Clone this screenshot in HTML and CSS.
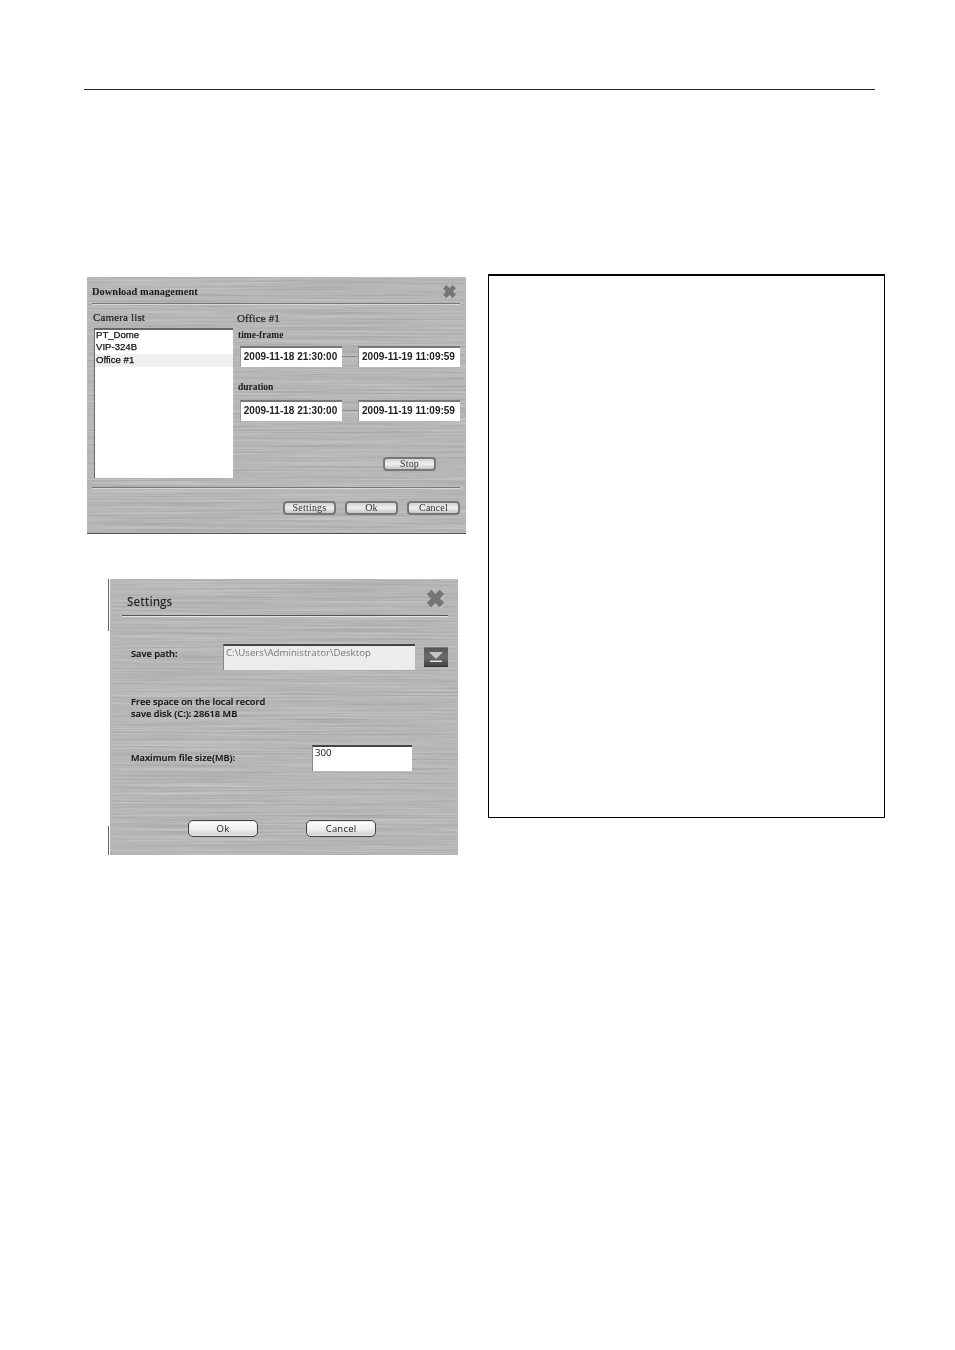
FILE: index.html
```html
<!DOCTYPE html>
<html lang="en">
<head>
<meta charset="utf-8">
<title>Download management</title>
<link rel="stylesheet" href="styles.css">
</head>
<body>
<div class="page">
  <div class="top-rule"></div>
  <div class="content">
    <div class="shots">
      <section class="dlg dlg-download">
        <header class="dl-title">
          <span>Download management</span>
          <svg class="close" viewBox="0 0 16 16"><path d="M3.500 3.500 12.500 12.500M12.500 3.500 3.500 12.500"/></svg>
        </header>
        <div class="rule"></div>
        <div class="dl-body">
          <div class="dl-left">
            <div class="dl-label">Camera list</div>
            <ul class="cam-list">
              <li>PT_Dome</li>
              <li>VIP-324B</li>
              <li class="sel">Office #1</li>
            </ul>
          </div>
          <div class="dl-right">
            <div class="dl-label dl-office">Office #1</div>
            <div class="dl-sub">time-frame</div>
            <div class="range">
              <div class="dt">2009-11-18 21:30:00</div><i class="dash"></i><div class="dt">2009-11-19 11:09:59</div>
            </div>
            <div class="dl-sub dl-dur">duration</div>
            <div class="range">
              <div class="dt">2009-11-18 21:30:00</div><i class="dash"></i><div class="dt">2009-11-19 11:09:59</div>
            </div>
            <div class="stop-row"><button class="btn1">Stop</button></div>
          </div>
        </div>
        <div class="rule"></div>
        <div class="dl-actions">
          <button class="btn1">Settings</button>
          <button class="btn1">Ok</button>
          <button class="btn1">Cancel</button>
        </div>
      </section>

      <section class="dlg dlg-settings">
        <header class="st-title">
          <span>Settings</span>
          <svg class="close close-lg" viewBox="0 0 16 16"><path d="M3.500 3.500 12.500 12.500M12.500 3.500 3.500 12.500"/></svg>
        </header>
        <div class="rule st-rule"></div>
        <div class="st-path">
          <span class="st-text st-path-label">Save path:</span>
          <div class="st-input st-input-path">C:\Users\Administrator\Desktop</div>
          <div class="browse">
            <svg viewBox="0 0 24 18"><path fill="#c4c4c4" d="M5 4h14l-7 7z"/><path fill="#e6e6e6" d="M6 12.500h12V14H6z"/></svg>
          </div>
        </div>
        <p class="st-text st-free">Free space on the local record<br>save disk (C:): 28618 MB</p>
        <div class="st-max">
          <span class="st-text">Maximum file size(MB):</span>
          <div class="st-input st-input-max">300</div>
        </div>
        <div class="st-actions">
          <button class="btn2">Ok</button>
          <button class="btn2">Cancel</button>
        </div>
      </section>
    </div>
    <div class="note-box"></div>
  </div>
</div>
</body>
</html>
```

FILE: styles.css
```css
* { box-sizing: border-box; }
html, body { margin: 0; padding: 0; background: #fff; }
.page { width: 955px; height: 1350px; padding-top: 89px; overflow: hidden; }
.top-rule { width: 791px; height: 1px; margin-left: 84px; background: #222; }
.content { display: flex; align-items: flex-start; margin-top: 184px; margin-left: 87px; gap: 22px; }
.shots { width: 379px; padding-top: 3px; display: flex; flex-direction: column; gap: 45px; }
.note-box { width: 397px; height: 544px; border: 1px solid #000; border-top-width: 2px; background: #fff; }

.dlg {
  position: relative;
  filter: blur(.3px);
  background-color: #b8b8b8;
  background-image: url("data:image/svg+xml,%3Csvg xmlns='http://www.w3.org/2000/svg' width='400' height='300'%3E%3Cfilter id='n' color-interpolation-filters='sRGB' x='0' y='0' width='100%25' height='100%25'%3E%3CfeTurbulence type='fractalNoise' baseFrequency='.006 .55' numOctaves='3' seed='7'/%3E%3CfeColorMatrix values='.17 0 0 0 .63 .17 0 0 0 .63 .17 0 0 0 .63 0 0 0 0 1'/%3E%3C/filter%3E%3Crect width='400' height='300' filter='url(%23n)'/%3E%3C/svg%3E");
}
.rule { height: 2px; background: linear-gradient(180deg, #777 0 50%, #d8d8d8 50% 100%); }
.close { width: 17px; height: 17px; fill: none; stroke: #757575; stroke-width: 4.500px; filter: drop-shadow(1px 1px 0 #c4c4c4) blur(.6px); }
.close-lg { width: 23px; height: 23px; }

/* Download management */
.dlg-download {
  width: 379px; height: 257px; padding: 0 6px 0 5px;
  display: flex; flex-direction: column;
  border-bottom: 1px solid #555;
  font-family: "Liberation Serif", serif; color: #1a1a1a;
}
.dl-title { height: 26px; padding-top: 2px; display: flex; align-items: center; justify-content: space-between; font-size: 10.400px; font-weight: bold; letter-spacing: .05px; }
.dl-title .close { margin-right: 2px; }
.dl-body { height: 182px; display: flex; gap: 4px; flex: none; }
.dl-left { width: 140px; margin-left: 1px; }
.dl-label { height: 23px; padding-top: 6px; font-size: 11px; line-height: 13px; letter-spacing: .15px; -webkit-text-stroke: .2px #1a1a1a; }
.cam-list {
  list-style: none; width: 139px; height: 150px; margin: 0 0 0 1px; padding: 0 0 0 1px;
  background: #fff; border-top: 2px solid #666; border-left: 1px solid #666;
  font-family: "Liberation Sans", sans-serif; font-size: 9.600px; line-height: 10px; letter-spacing: 0; color: #111;
  -webkit-text-stroke: .25px #111;
}
.cam-list li { height: 12px; }
.cam-list .sel { background: #efefef; margin-left: -1px; padding-left: 1px; height: 13px; line-height: 12px; }
.dl-right { width: 226px; }
.dl-office { height: 24px; padding-top: 7px; }
.dl-sub { height: 17px; font-size: 9.500px; line-height: 12px; font-weight: bold; padding-left: 1px; }
.dl-dur { height: 19px; margin-top: 14px; }
.range { display: flex; align-items: center; margin-left: 3px; }
.dt {
  width: 102px; height: 21px; padding: 1px 2px 0 0; text-align: center;
  background: #fff; border-top: 2px solid #777; border-left: 1px solid #999;
  font-family: "Liberation Sans", sans-serif; font-size: 10px; font-weight: bold; line-height: 16px; letter-spacing: 0; color: #222;
}
.dash { width: 16px; height: 1px; background: #8a8a8a; }
.stop-row { display: flex; justify-content: flex-end; margin-top: 36px; padding-right: 24px; }
.btn1 {
  width: 53px; height: 14px; padding: 0; border: 2px solid #777; border-radius: 4px;
  background: linear-gradient(180deg, #d4d4d4, #efefef 50%, #c6c6c6);
  font-family: "Liberation Serif", serif; font-size: 10px; line-height: 10px; letter-spacing: .2px; color: #333;
}
.dl-actions { display: flex; justify-content: flex-end; gap: 9px; padding-top: 12px; }

/* Settings */
.dlg-settings {
  width: 348px; height: 276px; margin-left: 23px; padding: 0 10px 0 12px;
  font-family: "Open Sans", sans-serif; color: #111;
}
.dlg-settings::before, .dlg-settings::after { content: ""; position: absolute; left: -2px; width: 1px; background: #666; }
.dlg-settings::before { top: 0; height: 52px; }
.dlg-settings::after { bottom: 0; height: 29px; }
.st-title { height: 36px; padding: 7px 1px 0 5px; display: flex; align-items: center; justify-content: space-between; font-size: 11.700px; font-weight: 600; color: #2a2a2a; }
.st-title .close { margin-top: -5px; }
.st-rule { background: linear-gradient(180deg, #555 0 50%, #e6e6e6 50% 100%); }
.st-text { margin: 0; font-size: 9.300px; font-weight: 600; line-height: 12px; -webkit-text-stroke: .15px #111; }
.st-path { display: flex; align-items: center; margin-top: 27px; padding-left: 9px; height: 26px; }
.st-path-label { width: 92px; padding-bottom: 6px; }
.st-input { background: #fff; border-top: 2px solid #444; border-left: 1px solid #888; font-size: 9.700px; line-height: 12px; }
.st-input-path { width: 192px; height: 26px; padding: 1px 0 0 2px; background: #ececec; color: #777; }
.browse { width: 24px; height: 20px; margin-left: 9px; margin-top: -1px; background: linear-gradient(180deg, #555, #6c6c6c 50%, #444); border-top: 1px solid #777; border-bottom: 1px solid #333; }
.browse svg { display: block; width: 24px; height: 18px; }
.st-free { margin-top: 26px; padding-left: 9px; }
.st-max { display: flex; align-items: center; margin-top: 25px; padding-left: 9px; height: 26px; }
.st-max .st-text { width: 181px; }
.st-input-max { width: 100px; height: 26px; padding: 0 0 0 2px; color: #111; }
.st-actions { display: flex; gap: 48px; margin-top: 49px; padding-left: 66px; }
.btn2 {
  width: 70px; height: 17px; padding: 0; border: 1px solid #444; border-radius: 5px;
  background: linear-gradient(180deg, #fff, #f0f0f0 50%, #cfcfcf);
  box-shadow: inset 0 0 0 1px #e8e8e8;
  font-family: "Open Sans", sans-serif; font-size: 9.500px; line-height: 12px; letter-spacing: .2px; color: #222;
}
```
